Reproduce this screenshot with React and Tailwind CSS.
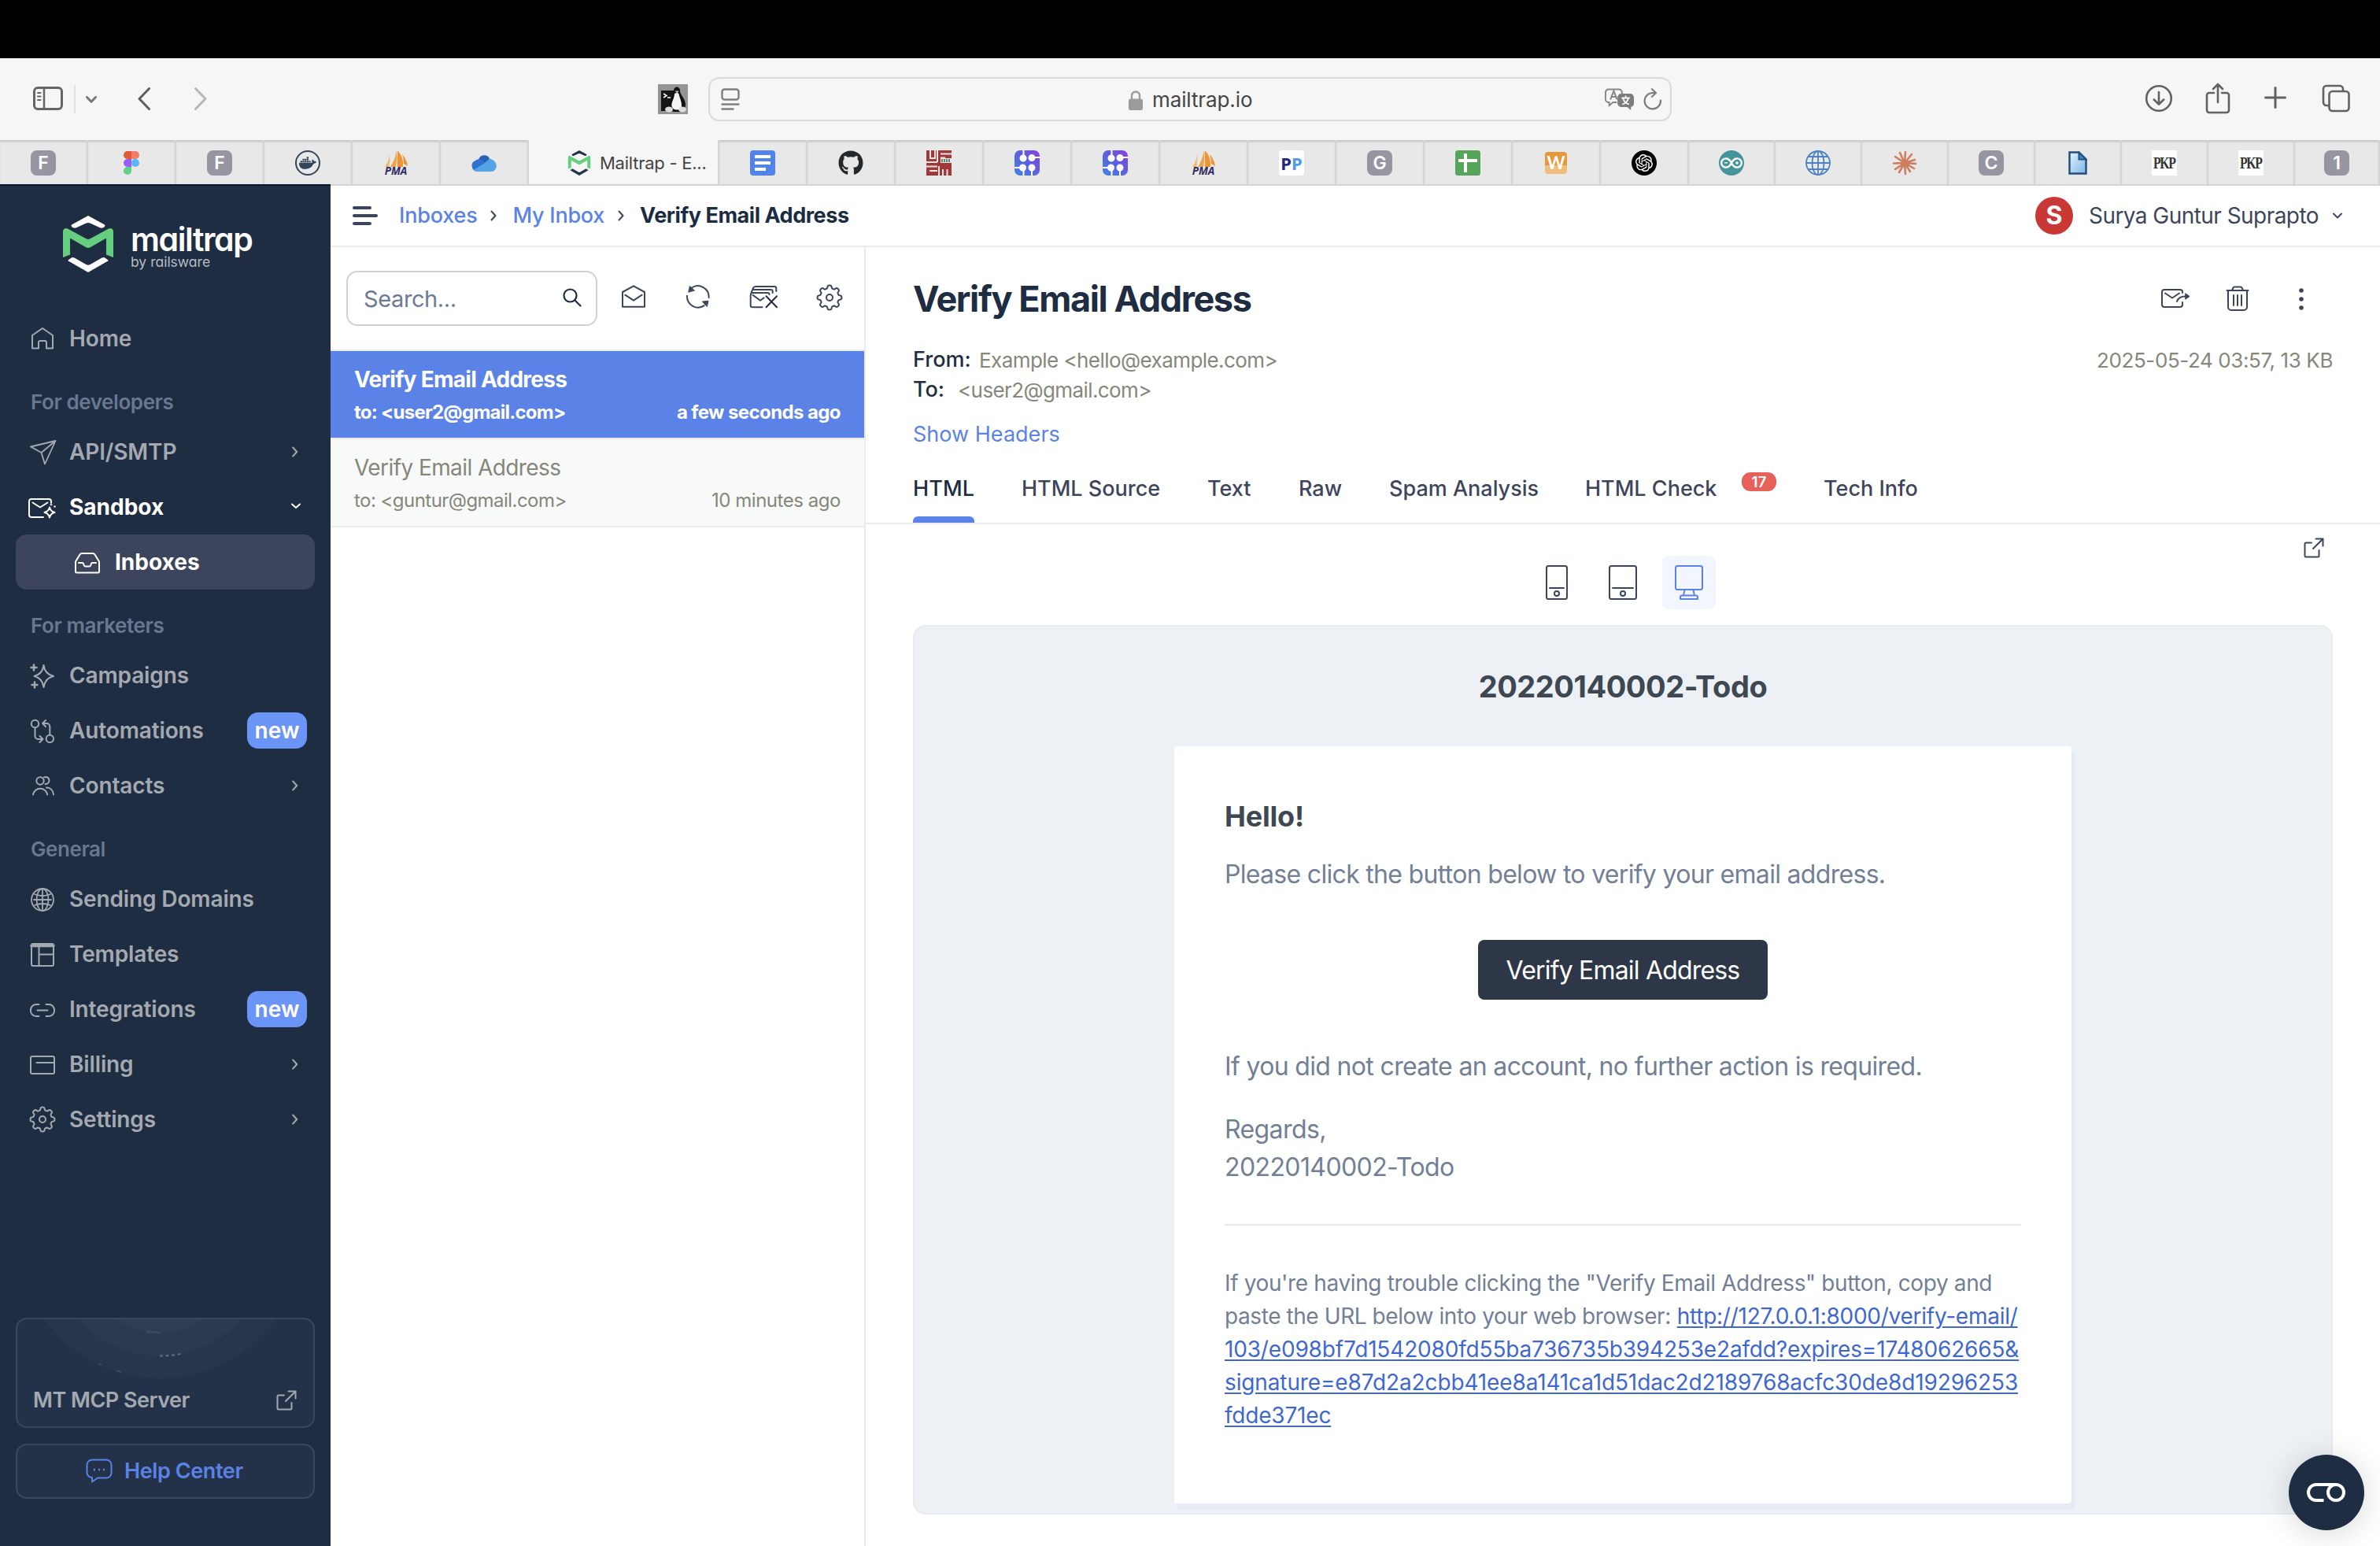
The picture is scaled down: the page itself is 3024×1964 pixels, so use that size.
import React from "react";
import { FaGithub, FaDocker } from "react-icons/fa";
import { SiOpenai, SiArduino } from "react-icons/si";

function T({ className = "", children }) {
  return <span className={"whitespace-nowrap " + className}>{children}</span>;
}

/* ---------- generic svg wrapper ---------- */
function Svg({ vb, className, sw = 2, children }) {
  return (
    <svg viewBox={vb} className={"shrink-0 " + className} fill="none" stroke="currentColor" strokeWidth={sw} strokeLinecap="round" strokeLinejoin="round">
      {children}
    </svg>
  );
}

function gearPath(c, r1, r2) {
  const pts = [];
  for (let i = 0; i < 160; i++) {
    const a = (i / 160) * Math.PI * 2;
    const k = Math.tanh(2.2 * Math.cos(8 * a)) / Math.tanh(2.2);
    const r = (r1 + r2) / 2 + ((r2 - r1) / 2) * k;
    pts.push(`${(c + r * Math.sin(a)).toFixed(2)} ${(c - r * Math.cos(a)).toFixed(2)}`);
  }
  return "M" + pts.join("L") + "Z";
}

function Gear({ className }) {
  return (
    <Svg vb="0 0 36 36" className={className}>
      <path d={gearPath(18, 11.8, 15.4)} />
      <circle cx="18" cy="18" r="4" />
    </Svg>
  );
}

function External({ className }) {
  return (
    <Svg vb="0 0 26 26" className={className}>
      <path d="M10 6.500H3a1.500 1.500 0 0 0-1.500 1.500v15A1.500 1.500 0 0 0 3 24.500h15a1.500 1.500 0 0 0 1.500-1.500v-7" />
      <path d="M12 14 24.500 1.500M15.500 1.500h9v9" strokeLinejoin="miter" />
    </Svg>
  );
}

/* ---------- browser chrome ---------- */
function MailtrapMark({ className, dark }) {
  const edge = dark ? "#26334a" : "#ffffff";
  return (
    <svg viewBox="0 0 64 72" className={className} fill="none">
      <path d="M32 0 53 11.500c1 .8 0 2.500-1.500 3.500-1.500 1-3 1-4.500.3L34.500 9.500a6 6 0 0 0-5 0L17 15.300c-1.500.7-3 .7-4.500-.3-1.500-1-2.500-2.700-1.500-3.500Z" fill={edge} />
      <path d="M0 20c0-3.500 3.500-5 6-3.500l23.500 12.800a5 5 0 0 0 5 0L58 16.500c2.500-1.500 6 0 6 3.500v33l-9-3.500V28.500L35 40a6 6 0 0 1-6 0L9 28.500v21L0 53Z" fill="#66cf7f" />
      <path d="M32 72 6 57l4-3c1.500-1.200 3-1.200 4.500-.4L29.500 62a5 5 0 0 0 5 0l15-8.400c1.500-.8 3-.8 4.500.4l4 3Z" fill={edge} />
    </svg>
  );
}

function LetterTile({ children }) {
  return (
    <div className="flex h-8 w-8 items-center justify-center rounded-lg bg-[#9695a2] text-[23px] leading-none font-semibold text-white">
      {children}
    </div>
  );
}

function Figma() {
  return (
    <svg viewBox="0 0 20 30" className="h-[30px] w-5">
      <path d="M5 0h5v10H5A5 5 0 0 1 5 0Z" fill="#e25a33" />
      <path d="M10 0h5a5 5 0 0 1 0 10h-5Z" fill="#ee7e6b" />
      <path d="M5 10h5v10H5a5 5 0 0 1 0-10Z" fill="#9a5cf7" />
      <circle cx="15" cy="15" r="5" fill="#56b6f9" />
      <path d="M5 20h5v5a5 5 0 1 1-5-5Z" fill="#5fcf8a" />
    </svg>
  );
}

function Docker() {
  return (
    <div className="flex h-8 w-8 items-center justify-center rounded-full border-[2.5px] border-[#33465a] text-[#33465a]">
      <FaDocker className="h-[22px] w-[22px]" />
    </div>
  );
}

function Pma() {
  return (
    <div className="relative flex h-8 w-8 flex-col items-center justify-end">
      <svg viewBox="0 0 32 22" className="absolute top-0 left-0 h-[22px] w-8">
        <path d="M8 4Q8 13 2 21h5Q9 13 8 4Z" fill="#f3b567" />
        <path d="M17 0q-2 12-8 21h7q2-10 1-21Z" fill="#f2a24a" />
        <path d="M18 0q8 8 7 21h-7Z" fill="#f09433" />
        <path d="M24 5q6 7 7 15l-5-3q0-7-2-12Z" fill="#f09433" />
      </svg>
      <span className="relative font-['Noto_Sans'] text-[13.500px] leading-[11px] font-bold text-[#2f2c62] italic">PMA</span>
    </div>
  );
}

function Cloud() {
  return (
    <svg viewBox="0 0 32 22" className="h-[22px] w-8">
      <path d="M9 7a7.500 7.500 0 0 1 14-1.500L16 15Z" fill="#2a5fb4" />
      <path d="M7 21.500A7 7 0 0 1 5 8a7 7 0 0 1 6.500-1.500L24 14 10 22Z" fill="#2f73cf" />
      <path d="M23 5.500c4.500 1 8.500 4 8.800 9A7 7 0 0 1 25 22H7.500a7 7 0 0 1-5-2L17 11Z" fill="#54a4e6" />
    </svg>
  );
}

function Docs() {
  return (
    <div className="flex h-8 w-8 flex-col gap-1 rounded bg-[#5083ee] px-1.5 pt-1.5">
      <div className="h-1 w-5 bg-white" />
      <div className="h-1 w-5 bg-white" />
      <div className="h-1 w-3.5 bg-white" />
    </div>
  );
}

function RedMaze() {
  return (
    <svg viewBox="0 0 32 32" className="h-8 w-8">
      <path d="M0 0h32v32H0Z" fill="#a33636" />
      <path d="M5 0v10h6V0M14 15V0M18 4.500h14M18 9.500h6M0 15h14M0 20.500h14M4 26h10M16 32V20M21 32v-8M26.500 32v-8" stroke="#e8e8e8" strokeWidth="2" fill="none" />
      <path d="M18 10h14v6H18Z" fill="#dfe7e3" />
      <path d="M20 11v4M23 11v4M26 11v4M29 11v4" stroke="#2f6b5a" strokeWidth="1.500" />
    </svg>
  );
}

function Nodes() {
  return (
    <svg viewBox="0 0 32 32" className="h-8 w-8">
      <defs>
        <linearGradient id="nodes" x1="0" y1="1" x2="1" y2="0">
          <stop offset="0" stopColor="#3f86e8" />
          <stop offset=".5" stopColor="#5b60de" />
          <stop offset="1" stopColor="#8a3fe0" />
        </linearGradient>
      </defs>
      <rect width="32" height="32" rx="7" fill="url(#nodes)" />
      <g stroke="#fff" strokeWidth="2" fill="#fff">
        <path d="M11.500 0v10M22 9h10M0 22h10M22 22v10M11.500 22v10" />
        <circle cx="11" cy="10" r="3.500" />
        <circle cx="22" cy="9.500" r="3.500" />
        <circle cx="10.500" cy="22" r="3.500" />
        <circle cx="22" cy="22" r="3.500" />
      </g>
    </svg>
  );
}

function Pp() {
  return (
    <div className="flex h-8 w-8 items-center justify-center rounded bg-white font-['Noto_Sans'] text-[22px] leading-none font-bold">
      <span className="text-[#1d2a80]">P</span>
      <span className="text-[#4a9be8]">P</span>
    </div>
  );
}

function Sheets() {
  return (
    <svg viewBox="0 0 32 32" className="h-8 w-8">
      <rect width="32" height="32" rx="3.500" fill="#57a55a" />
      <path d="M13 4v24M4 13h24" stroke="#fff" strokeWidth="4" />
    </svg>
  );
}

function WTile() {
  return (
    <div className="flex h-7 w-7 items-center justify-center rounded bg-linear-to-b from-[#e8963a] from-60% to-[#efbd7c] to-60% font-['Lato'] text-[22px] leading-none font-bold text-white">
      W
    </div>
  );
}

function Gpt() {
  return (
    <div className="flex h-8 w-8 items-center justify-center rounded-full bg-black text-white">
      <SiOpenai className="h-[22px] w-[22px]" />
    </div>
  );
}

function Arduino() {
  return (
    <div className="flex h-8 w-8 items-center justify-center rounded-full bg-[#45959b] text-white">
      <SiArduino className="h-7 w-7" />
    </div>
  );
}

function BlueGlobe() {
  return (
    <Svg vb="0 0 32 32" className="h-8 w-8 text-[#4c82c3]" sw={1.8}>
      <circle cx="16" cy="16" r="15" />
      <ellipse cx="16" cy="16" rx="7.500" ry="15" />
      <path d="M16 1v30M1 16h30M4 8h24M4 24h24" />
    </Svg>
  );
}

function Burst() {
  return (
    <Svg vb="0 0 32 32" className="h-8 w-8 text-[#d07d5f]" sw={2.6}>
      <path d="M16 16 10 3M16 16 17 2M16 16l9-11M16 16l13-4M16 16l14 1M16 16l12 7M16 16l7 11M16 16l1 14M16 16 9 28M16 16 4 24M16 16 2 16.500M16 16 4 8" />
    </Svg>
  );
}

function FileIcon() {
  return (
    <svg viewBox="0 0 24 30" className="h-[30px] w-6">
      <defs>
        <linearGradient id="file" x1="0" y1="0" x2="1" y2="1">
          <stop offset="0" stopColor="#e4f1fb" />
          <stop offset="1" stopColor="#7db6e6" />
        </linearGradient>
      </defs>
      <path d="M1.500 1.500h12l9 9v18h-21Z" fill="url(#file)" stroke="#24507f" strokeWidth="2.500" />
      <path d="M13.500 1.500v9h9Z" fill="#3f8ad0" stroke="#24507f" strokeWidth="2" />
    </svg>
  );
}

function Pkp() {
  return (
    <div className="flex h-8 w-8 items-center justify-center overflow-hidden bg-white">
      <span className="scale-x-[0.88] scale-y-[1.15] font-['Liberation_Serif'] text-[18px] leading-none font-bold tracking-[-1.5px] text-[#333]">PKP</span>
    </div>
  );
}

function Tab({ className = "w-28", children }) {
  return (
    <div className={"flex h-[56px] shrink-0 items-center justify-center border-r-2 border-[#d5d5d5] bg-[#e8e8e8] pt-0.5 shadow-[inset_0_3px_3px_-1px_#c2c2c2] " + className}>
      {children}
    </div>
  );
}

const tabsA = [<LetterTile>F</LetterTile>, <Figma />, <LetterTile>F</LetterTile>, <Docker />, <Pma />, <Cloud />];
const tabsB = [<Docs />, <FaGithub className="h-8 w-8 text-[#24292e]" />, <RedMaze />, <Nodes />, <Nodes />, <Pma />, <Pp />, <LetterTile>G</LetterTile>, <Sheets />, <WTile />, <Gpt />];
const tabsC = [<Arduino />, <BlueGlobe />, <Burst />, <LetterTile>C</LetterTile>, <FileIcon />, <Pkp />, <Pkp />];

function Penguin() {
  return (
    <svg viewBox="0 0 38 38" className="ml-[573px] h-[38px] w-[38px] shrink-0">
      <path d="M0 0h38v38H0Z" fill="#949494" />
      <path d="M4 8h17v26H4Z" fill="#161616" />
      <path d="M7 12l4 2.500L7 17M12 17h4" stroke="#fff" strokeWidth="1.500" fill="none" />
      <path d="M20 8c0-6 8-6 8 0 0 6 7 10 7 18 0 4-3 9-6 9h-8c-4 0-7-3-7-8 0-8 6-11 6-19Z" fill="#111" />
      <path d="M21 12c2-1.500 4-1.500 5.500 0 1 6 4 10 3.500 16-1 6-11 6-12.500 0-1-5 3.500-10 3.500-16Z" fill="#f4f4f4" />
      <ellipse cx="14" cy="32" rx="5" ry="3.500" fill="#ddd" />
      <ellipse cx="31" cy="32" rx="5" ry="3.500" fill="#ddd" />
      <path d="M21.500 8.500h5l-2 3Z" fill="#ccc" />
    </svg>
  );
}

function Browser() {
  return (
    <>
      <div className="h-[74px] shrink-0 bg-black" />
      <div className="flex h-[104px] shrink-0 items-center bg-[#f6f6f6] pl-[42px] text-[#666]">
        <Svg vb="0 0 38 30" className="h-[30px] w-[38px] -translate-y-px" sw={3}>
          <rect x="1.500" y="1.500" width="35" height="27" rx="4.500" />
          <path d="M14 2v26" strokeWidth="2.500" />
          <path d="M6 8h3.500M6 12.500h3.500M6 17h3.500" strokeWidth="2" />
        </Svg>
        <div className="ml-[14px] h-9 w-0.5 bg-[#e2e2e2]" />
        <Svg vb="0 0 14 9" className="ml-[13px] h-[9px] w-[14px] text-[#777]" sw={3}>
          <path d="M1.500 1.500 7 7.200l5.500-5.700" />
        </Svg>
        <Svg vb="0 0 16 29" className="ml-[52px] h-[29px] w-4 -translate-y-px text-[#5e5e5e]" sw={3}>
          <path d="M14.500 1.500 2 14.500l12.500 13" />
        </Svg>
        <Svg vb="0 0 16 29" className="ml-14 h-[29px] w-4 -translate-y-px text-[#b7b7b7]" sw={3}>
          <path d="M1.500 1.500 14 14.500 1.500 27.500" />
        </Svg>
        <Penguin />
        <div className="ml-[26px] flex h-[56px] w-[1224px] shrink-0 items-center rounded-[14px] border-2 border-[#dadada] px-[14px]">
          <Svg vb="0 0 24 28" className="h-7 w-6 text-[#808080]" sw={2.4}>
            <rect x="1.500" y="1.500" width="21" height="13" rx="3" />
            <path d="M1.500 20.500h21M1.500 26.500h14" />
          </Svg>
          <svg viewBox="0 0 18 25" className="mt-[3px] ml-[494px] h-[25px] w-[18px] text-[#9b9b9b]">
            <rect y="10.500" width="18" height="14.500" rx="2.500" fill="currentColor" />
            <path d="M4 12V6.500a5 5 0 0 1 10 0V12" fill="none" stroke="currentColor" strokeWidth="2.400" />
          </svg>
          <T className="mt-px ml-3 text-[26px] leading-8 tracking-[-0.1px] text-[#454545]">mailtrap.io</T>
          <div className="ml-auto flex items-center gap-[11px]">
            <svg viewBox="0 0 40 28" className="h-7 w-[38px]" fill="none" preserveAspectRatio="none">
              <path d="M5 1.500h14a4 4 0 0 1 4 4v3M16 18h-5l-5 4v-4H5a4 4 0 0 1-4-4V5.500a4 4 0 0 1 4-4" stroke="#858585" strokeWidth="2" />
              <path d="m7.500 14.500 4.500-11 4.500 11M9 11h6" stroke="#858585" strokeWidth="2" />
              <path d="M22 7h12a5 5 0 0 1 5 5v7a5 5 0 0 1-4 4.800V28l-5-4h-8a5 5 0 0 1-5-5v-7a5 5 0 0 1 5-5Z" fill="#7d7d7d" />
              <path d="M28 9.500v2.500M22.500 12.500h11M24.500 13c1 3.500 4 6.500 8 7.500M31.500 13c-1 3.500-4 6.500-8 7.500" stroke="#fff" strokeWidth="1.800" />
            </svg>
            <Svg vb="0 0 24 28" className="-mr-[4px] h-7 w-6 text-[#7d7d7d]" sw={2.2}>
              <path d="M22 15.500A10.200 10.200 0 1 1 12 6h3" />
              <path d="m11 1.200 5 4.800-5 4.800" />
            </Svg>
          </div>
        </div>
        <div className="ml-auto flex items-center pr-[38px] text-[#626262]">
          <Svg vb="0 0 36 36" className="h-9 w-9 -translate-y-px" sw={2.6}>
            <circle cx="18" cy="18" r="15.800" />
            <path d="M18 10v15M11.800 19.500 18 25.700l6.200-6.200" />
          </Svg>
          <Svg vb="0 0 32 40" className="ml-[41px] h-10 w-8 -translate-y-px" sw={2.6}>
            <path d="M11 13H5a3 3 0 0 0-3 3v19a3 3 0 0 0 3 3h22a3 3 0 0 0 3-3V16a3 3 0 0 0-3-3h-6" />
            <path d="M16 25V2.500M10 8l6-6 6 6" />
          </Svg>
          <Svg vb="0 0 28 28" className="ml-[43px] h-7 w-7 -translate-y-0.5" sw={3}>
            <path d="M14 1.500v25M1.500 14h25" />
          </Svg>
          <Svg vb="0 0 36 36" className="ml-[45px] h-9 w-9 -translate-y-px" sw={2.6}>
            <path d="M8.500 27H6a4 4 0 0 1-4-4V6a4 4 0 0 1 4-4h17a4 4 0 0 1 4 4v2.500" />
            <rect x="9.500" y="9" width="25" height="25" rx="4" />
          </Svg>
        </div>
      </div>
      <div className="flex h-[58px] shrink-0 border-b-2 border-[#d5d5d5] bg-[#e8e8e8]">
        {tabsA.map((t, i) => <Tab key={i}>{t}</Tab>)}
        <div className="flex h-[56px] w-[242px] shrink-0 items-center border-r-2 border-[#d5d5d5] bg-[#f6f6f6] pt-0.5 pl-[49px]">
          <MailtrapMark dark className="h-8 w-[30px]" />
          <T className="ml-[11px] text-[22px] leading-7 tracking-[-0.25px] text-[#444]">Mailtrap - E...</T>
        </div>
        {tabsB.map((t, i) => <Tab key={i}>{t}</Tab>)}
        {tabsC.map((t, i) => <Tab key={i} className="w-[110px]">{t}</Tab>)}
        <Tab className="w-[108px] border-r-0"><LetterTile>1</LetterTile></Tab>
      </div>
    </>
  );
}

/* ---------- sidebar ---------- */
const icons = {
  home: (
    <Svg vb="0 0 36 36" className="h-9 w-9">
      <path d="M5 30.500V14L18 5l13 9v16.500h-8V23a2 2 0 0 0-2-2h-6a2 2 0 0 0-2 2v7.500Z" />
    </Svg>
  ),
  plane: (
    <Svg vb="0 0 36 36" className="h-9 w-9" sw={1.8}>
      <path d="M34.500 4 3 11.500l13.500 7.500L21 33.500ZM34.500 4l-18 15" />
    </Svg>
  ),
  sandbox: (
    <Svg vb="0 0 36 36" className="h-9 w-9">
      <path d="M19 31H4a3 3 0 0 1-3-3V11a3 3 0 0 1 3-3h22a3 3 0 0 1 3 3v1.500" />
      <path d="m5.500 12.500 9.500 6 9.500-6" />
      <path d="M27 18.500q1 5 6.500 6.500-5.500 1.500-6.500 6.500-1-5-6.500-6.500 5.500-1.500 6.500-6.500Z" />
      <circle cx="33.500" cy="17.500" r="1.200" fill="currentColor" stroke="none" />
      <circle cx="29" cy="15" r=".4" />
    </Svg>
  ),
  inbox: (
    <Svg vb="0 0 36 36" className="h-9 w-9">
      <path d="M3 17.500 8.500 8.500Q9.500 7 11 7h14q1.500 0 2.500 1.500l5.500 9V30a1.500 1.500 0 0 1-1.500 1.500h-27A1.500 1.500 0 0 1 3 30Z" />
      <path d="M7 19h4.500q1.500 0 2 2.500.5 2 2 2h5q1.500 0 2-2 .5-2.500 2-2.500H29" />
    </Svg>
  ),
  sparkle: (
    <Svg vb="0 0 36 36" className="h-9 w-9">
      <path d="M19.500 5q1.500 11.500 12.500 14-11 2.500-12.500 14Q18 21.500 7.500 19 18 16.500 19.500 5Z" />
      <path d="M7 4.500v7M3.500 8h7M8 26.500v7M4.500 30h7" strokeWidth="2.500" />
    </Svg>
  ),
  flow: (
    <Svg vb="0 0 36 36" className="h-9 w-9">
      <circle cx="8.500" cy="9.500" r="4.700" />
      <circle cx="27.300" cy="28.500" r="4.700" />
      <path d="M8.500 15v10a4 4 0 0 0 4 4H18M14.500 25l4 4-4 4M27.300 23V13a4 4 0 0 0-4-4H18M22 5l-4 4 4 4" />
    </Svg>
  ),
  people: (
    <Svg vb="0 0 36 36" className="h-9 w-9">
      <circle cx="15" cy="12" r="4.700" />
      <path d="M6 29.500a9.200 9.200 0 0 1 18.200 0M20 7.500a4.500 4.500 0 1 1 1.500 8.500M23 20.500c5 0 8.500 3.500 9 9" />
    </Svg>
  ),
  globe: (
    <Svg vb="0 0 36 36" className="h-9 w-9" sw={1.8}>
      <circle cx="18" cy="19" r="14" />
      <ellipse cx="18" cy="19" rx="7.500" ry="14" />
      <path d="M18 5v28M7 19h22M8 12q10 4 20 0M8 26q10-4 20 0" />
    </Svg>
  ),
  template: (
    <Svg vb="0 0 36 36" className="h-9 w-9">
      <rect x="4" y="5" width="28" height="28" rx="2" />
      <path d="M4 7.500h28" strokeWidth="3.500" />
      <path d="M13.500 8v25M13.500 18.500H32" />
    </Svg>
  ),
  link: (
    <Svg vb="0 0 36 36" className="h-9 w-9">
      <path d="M13.500 12H10a7 7 0 0 0-7 7 7 7 0 0 0 7 8h3.500M22.500 12H26a7 7 0 0 1 7 7 7 7 0 0 1-7 8h-3.500M11.500 19.500h13" />
    </Svg>
  ),
  card: (
    <Svg vb="0 0 36 36" className="h-9 w-9">
      <rect x="3" y="8" width="30" height="22" rx="2" />
      <path d="M10.500 16H32" />
    </Svg>
  ),
  gear: <Gear className="h-9 w-9" />,
};

function Chevron({ open }) {
  return open ? (
    <Svg vb="0 0 12 8" className="mr-[38px] ml-auto h-2 w-3 -translate-y-px" sw={2}>
      <path d="m1 1.500 5 4.500 5-4.500" />
    </Svg>
  ) : (
    <Svg vb="0 0 8 14" className="mr-[41px] ml-auto h-[14px] w-2" sw={2}>
      <path d="m1.200 1.500 5 5.500-5 5.500" />
    </Svg>
  );
}

function NewBadge() {
  return (
    <span className="mr-[30px] ml-auto flex h-[46px] w-[76px] items-center justify-center rounded-[14px] bg-[#6b94f7] text-white">
      <T className="text-[28px] leading-8 font-[580] tracking-[0.1px]">new</T>
    </span>
  );
}

function Item({ icon, label, tail }) {
  return (
    <div className="flex h-[70px] shrink-0 items-center pl-9 text-[#a4a9b1]">
      {icons[icon]}
      <T className="ml-4 text-[28px] leading-9 font-[570] tracking-[-0.13px]">{label}</T>
      {tail}
    </div>
  );
}

function Heading({ children }) {
  return (
    <div className="flex h-[74px] shrink-0 items-center pt-[18px] pl-[39px]">
      <T className="text-[26px] leading-8 font-[600] tracking-[-0.42px] text-[#6a7790]">{children}</T>
    </div>
  );
}

function Sidebar() {
  return (
    <aside className="-mt-0.5 flex w-[420px] shrink-0 flex-col border-t-2 border-[#0c1630] bg-[#1f2d42]">
      <div className="flex h-[159px] shrink-0 items-start pt-[38px] pl-20">
        <MailtrapMark className="h-[72px] w-16" />
        <div className="flex flex-col pt-[11px] pl-[22px]">
          <T className="text-[41px] leading-[38px] font-semibold tracking-[-1.4px] text-white [font-feature-settings:'cv11']">mailtrap</T>
          <T className="text-[17.500px] leading-[20px] text-[#b6bcc6] [font-feature-settings:'cv11']">by railsware</T>
        </div>
      </div>
      <Item icon="home" label="Home" />
      <Heading>For developers</Heading>
      <Item icon="plane" label="API/SMTP" tail={<Chevron />} />
      <div className="flex h-[70px] shrink-0 items-center pl-9 text-white">
        {icons.sandbox}
        <T className="ml-4 text-[28px] leading-9 font-[670]">Sandbox</T>
        <Chevron open />
      </div>
      <div className="mx-5 flex h-[70px] shrink-0 items-center rounded-[14px] bg-[#3c455c] pl-[73px] text-white">
        {icons.inbox}
        <T className="ml-[17px] text-[28px] leading-9 font-[670]">Inboxes</T>
      </div>
      <Heading>For marketers</Heading>
      <Item icon="sparkle" label="Campaigns" />
      <Item icon="flow" label="Automations" tail={<NewBadge />} />
      <Item icon="people" label="Contacts" tail={<Chevron />} />
      <Heading>General</Heading>
      <Item icon="globe" label="Sending Domains" />
      <Item icon="template" label="Templates" />
      <Item icon="link" label="Integrations" tail={<NewBadge />} />
      <Item icon="card" label="Billing" tail={<Chevron />} />
      <Item icon="gear" label="Settings" tail={<Chevron />} />
      <div className="mx-5 mt-auto mb-[60px] flex flex-col gap-5">
        <div className="relative flex h-[140px] items-end justify-between overflow-hidden rounded-[14px] border-2 border-[#3d465d] bg-[#233248] pr-[21px] pb-[17px] pl-5 text-[#a4a9b1]">
          <svg viewBox="0 0 376 136" className="absolute top-0 left-0 h-[136px] w-[376px]" fill="none">
            <circle cx="181" cy="-106" r="181" fill="#27364c" />
            <circle cx="181" cy="-92" r="138.500" fill="#2b3a50" />
            <circle cx="181" cy="-83" r="100" fill="#2f3e54" />
            <path d="M164 15.500 181.500 17" stroke="#3b495e" strokeWidth="3" />
            <path d="M181 46.500q14 0 27-2.500" stroke="#5b6779" strokeWidth="2.500" strokeDasharray="4 3.500" />
            <path d="m126 65 6 2M103 56l4 2" stroke="#3d4a5f" strokeWidth="2" />
          </svg>
          <T className="relative text-[27px] leading-8 font-semibold tracking-[-0.5px]">MT MCP Server</T>
          <External className="relative mb-[3px] h-[26px] w-[26px]" />
        </div>
        <div className="flex h-[70px] items-center rounded-[14px] border-2 border-[#3d465d] bg-[#233248] pl-[87px] text-[#5a82e7]">
          <Svg vb="0 0 34 32" className="h-8 w-[34px]">
            <path d="M8 1.500h18a6.500 6.500 0 0 1 6.500 6.500v10a6.500 6.500 0 0 1-6.500 6.500H15l-7 5v-5.500A6.500 6.500 0 0 1 1.500 18V8A6.500 6.500 0 0 1 8 1.500Z" />
            <path d="M11 13.500v1M17 13.500v1M23 13.500v1" strokeWidth="2.200" />
          </Svg>
          <T className="ml-[15px] text-[27px] leading-8 font-semibold tracking-[-0.4px]">Help Center</T>
        </div>
      </div>
    </aside>
  );
}

/* ---------- header ---------- */
function Crumb() {
  return (
    <Svg vb="0 0 8 14" className="mr-[20px] ml-[17px] h-[14px] w-2 text-[#3c455c]" sw={2}>
      <path d="m1.500 1.500 5 5.500-5 5.500" />
    </Svg>
  );
}

function Header() {
  return (
    <header className="flex h-[78px] shrink-0 items-center border-b-2 border-[#ebebeb] bg-white pl-7">
      <div className="flex w-8 flex-col gap-[6px]">
        <div className="h-1 w-6 rounded-full bg-[#3c455c]" />
        <div className="h-1 w-8 rounded-full bg-[#3c455c]" />
        <div className="h-1 w-6 rounded-full bg-[#3c455c]" />
      </div>
      <T className="ml-[27px] text-[27px] leading-8 font-medium tracking-[-0.2px] text-[#5a82e7]">Inboxes</T>
      <Crumb />
      <T className="text-[27px] leading-8 font-medium tracking-[-0.25px] text-[#5a82e7]">My Inbox</T>
      <Crumb />
      <T className="text-[27px] leading-8 font-[650] tracking-[-0.45px] text-[#1a2b42]">Verify Email Address</T>
      <div className="ml-auto flex items-center pr-12">
        <div className="flex h-12 w-12 items-center justify-center rounded-full bg-[#c93834] text-[32px] leading-none font-bold text-white">S</div>
        <T className="ml-5 text-[28px] leading-8 tracking-[-0.55px] text-[#3c455c]">Surya Guntur Suprapto</T>
        <Svg vb="0 0 12 8" className="ml-[18px] h-2 w-3 text-[#3c455c]" sw={2}>
          <path d="m1 1.500 5 5 5-5" />
        </Svg>
      </div>
    </header>
  );
}

/* ---------- message list ---------- */
function List() {
  return (
    <section className="flex w-[680px] shrink-0 flex-col border-r-2 border-[#ebebeb] bg-white">
      <div className="flex h-[132px] shrink-0 items-center border-b-2 border-[#ebebeb] pl-5 text-[#3c455c]">
        <div className="flex h-[70px] w-[319px] items-center justify-between rounded-[14px] border-2 border-[#d0d2da] pr-[18px] pl-5">
          <T className="mt-px text-[29px] leading-9 tracking-[-0.4px] text-[#6b7a95]">Search...</T>
          <Svg vb="0 0 24 24" className="h-6 w-6 -translate-y-px text-[#1f2d42]" sw={2.2}>
            <circle cx="9.500" cy="9.500" r="8" />
            <path d="m15.500 15.500 7 7" />
          </Svg>
        </div>
        <Svg vb="0 0 32 32" className="ml-[30px] h-8 w-8 -translate-y-0.5">
          <path d="M2 10 16 2.300 30 10v18.700H2Z" />
          <path d="m5.300 13.700 10.700 7 10.700-7" />
        </Svg>
        <Svg vb="0 0 32 32" className="ml-[50px] h-8 w-8 -translate-y-0.5">
          <path d="M8 4.500A14 14 0 0 1 29.600 17" />
          <path d="M23.800 27.200A14 14 0 0 1 2 14.800" />
          <path d="M3.800 9.800 5.400 2.500l5.800 5.400ZM28.600 21.300l-7.200.8 5.800 6.200Z" fill="currentColor" strokeWidth="1" />
        </Svg>
        <Svg vb="0 0 38 32" className="ml-[49px] h-8 w-[38px] -translate-y-px">
          <path d="M16.500 28.200H4a2.300 2.300 0 0 1-2.300-2.300V13.500q0-1.500.8-3.500l2.500-6Q6 2 8 2h24q2.300 0 2.300 2.300V8" />
          <path d="M5 6h22.500q2.200 0 2.200 2.200v1.800M3.500 10h20q2 0 2 2" />
          <path d="m4.500 12.700 9.500 7.100 4.700-3.500" />
          <path d="m21.500 14.200 13.500 14M35 14.200l-13.500 14" stroke="#1f2a48" />
        </Svg>
        <Gear className="ml-[46px] h-9 w-9 -translate-y-px" />
      </div>
      <div className="flex h-28 shrink-0 flex-col border-b-2 border-[#ebebeb] bg-[#5a82e7] pt-[17px] pr-[30px] pl-[30px] text-white">
        <T className="text-[28px] leading-[38px] font-[650] tracking-[-0.72px]">Verify Email Address</T>
        <div className="flex justify-between pt-[5px]">
          <T className="text-[24px] leading-9 font-[650] tracking-[-0.75px]">to: &lt;user2@gmail.com&gt;</T>
          <T className="text-[24px] leading-9 font-[650] tracking-[-0.6px]">a few seconds ago</T>
        </div>
      </div>
      <div className="flex h-28 shrink-0 flex-col border-b-2 border-[#ebebeb] bg-[#f8faf9] pt-[17px] pr-[30px] pl-[30px] text-[#84877a]">
        <T className="text-[28px] leading-[38px] tracking-[-0.58px]">Verify Email Address</T>
        <div className="flex justify-between pt-[5px]">
          <T className="text-[24px] leading-9 tracking-[-0.54px]">to: &lt;guntur@gmail.com&gt;</T>
          <T className="text-[24px] leading-9 tracking-[-0.46px]">10 minutes ago</T>
        </div>
      </div>
    </section>
  );
}

/* ---------- message ---------- */
function Message() {
  return (
    <main className="flex min-w-0 flex-1 flex-col bg-white text-[#3c455c]">
      <div className="flex h-[350px] shrink-0 flex-col pl-[60px]">
        <div className="flex h-[132px] items-center">
          <T className="text-[45px] leading-[60px] font-[650] tracking-[-1.4px] text-[#1f2d42]">Verify Email Address</T>
          <div className="ml-auto flex items-center">
            <Svg vb="0 0 38 26" className="h-[26px] w-[38px] -translate-y-px">
              <path d="M28 18v3a3 3 0 0 1-3 3H5a3 3 0 0 1-3-3V5a3 3 0 0 1 3-3h20a3 3 0 0 1 3 3v1" />
              <path d="m6 6.500 9 6 9-6M21 17q2-6.500 11-6.500" />
              <path d="m32 7 5 3.500-5 3.500Z" fill="currentColor" strokeWidth="1" />
            </Svg>
            <Svg vb="0 0 30 32" className="ml-[45px] h-8 w-[30px] -translate-y-px">
              <path d="M1.500 6h27M3 6v21a4 4 0 0 0 4 4h16a4 4 0 0 0 4-4V6M8 6l1.500-3.500Q10 1.500 11 1.500h8q1 0 1.500 1L22 6M10 12v13M15 12v13M20 12v13" />
            </Svg>
            <svg viewBox="0 0 8 28" className="mr-24 ml-[62px] h-7 w-2" fill="currentColor">
              <circle cx="4" cy="3" r="2.800" />
              <circle cx="4" cy="14" r="2.800" />
              <circle cx="4" cy="25" r="2.800" />
            </svg>
          </div>
        </div>
        <div className="-mt-[8px] flex h-[38px] items-center text-[26px]">
          <T className="w-[84px] text-[27px] font-medium text-[#1f2d42]">From:</T>
          <T className="tracking-[-0.56px] text-[#84877a]">Example &lt;hello@example.com&gt;</T>
          <T className="mr-[60px] ml-auto tracking-[-0.4px] text-[#84877a]">2025-05-24 03:57, 13 KB</T>
        </div>
        <div className="flex h-[38px] items-center text-[26px]">
          <T className="w-[57px] text-[27px] font-medium text-[#1f2d42]">To:</T>
          <T className="tracking-[-0.6px] text-[#84877a]">&lt;user2@gmail.com&gt;</T>
        </div>
        <div className="flex h-[77px] items-center">
          <T className="text-[27px] tracking-[0.02px] text-[#5a82e7]">Show Headers</T>
        </div>
        <div className="flex h-[73px] text-[27px] leading-[60px] font-medium">
          <div className="mr-[60px] flex w-[78px] flex-col justify-between">
            <T className="tracking-[0.1px] text-[#1a2b42]">HTML</T>
            <div className="h-2 rounded-t-md bg-[#5a82e7]" />
          </div>
          <T className="w-[236px]">HTML Source</T>
          <T className="w-[116px]">Text</T>
          <T className="w-[115px]">Raw</T>
          <T className="w-[249px]">Spam Analysis</T>
          <T className="w-[199px]">HTML Check</T>
          <span className="mt-[9px] mr-[60px] flex h-6 w-11 items-center justify-center rounded-[11px] bg-[#e8605a]">
            <T className="text-[19px] leading-none font-semibold text-white">17</T>
          </span>
          <T>Tech Info</T>
        </div>
      </div>
      <div className="flex min-h-0 flex-1 flex-col border-t-2 border-[#ebebeb] pt-[17px] pr-[60px] pl-[60px]">
        <External className="mr-[11px] h-[26px] w-[26px] self-end" />
        <div className="-mt-[3px] flex h-[68px] shrink-0 items-center justify-center pl-[20px]">
          <Svg vb="0 0 28 44" className="h-11 w-7">
            <rect x="1" y="1" width="26" height="42" rx="2.500" />
            <path d="M5 29h18" />
            <circle cx="14" cy="36" r="3" />
          </Svg>
          <Svg vb="0 0 36 44" className="ml-[52px] h-11 w-9">
            <rect x="1" y="1" width="34" height="42" rx="2.500" />
            <path d="M5 29h26" />
            <circle cx="18" cy="36" r="3" />
          </Svg>
          <div className="ml-8 flex h-[68px] w-[68px] items-center justify-center rounded-lg bg-[#f2f7ff] text-[#5a82e7]">
            <Svg vb="0 0 36 44" className="h-11 w-9">
              <rect x="1" y="1" width="34" height="30" rx="2.500" />
              <path d="M12.500 31.500 11 38.500h14l-1.500-7M9 38.500h18a2 2 0 0 1 2 2V43H7v-2.500a2 2 0 0 1 2-2Z" />
            </Svg>
          </div>
        </div>
        <div className="mt-5 flex h-[1130px] shrink-0 flex-col items-center rounded-[16px] border-2 border-[#e9ebee] bg-[#edf1f6]">
          <div className="flex h-[152px] items-center">
            <T className="text-[38px] leading-[56px] font-bold tracking-[-0.45px] text-[#3d4852]">20220140002-Todo</T>
          </div>
          <div className="flex h-[962px] w-[1140px] shrink-0 flex-col rounded-[4px] bg-white px-16 pt-16 text-[32px] leading-[48px] text-[#718096] shadow-[4px_8px_0_#e6eaf4]">
            <h1 className="flex h-[50px] items-center">
              <T className="text-[36px] font-bold tracking-[-0.2px] text-[#3d4852]">Hello!</T>
            </h1>
            <p className="mt-[26px] flex h-12 -translate-y-px items-center"><T className="tracking-[-0.69px]">Please click the button below to verify your email address.</T></p>
            <div className="mx-auto mt-[58px] flex h-[76px] w-[368px] items-center justify-center rounded-lg bg-[#2d3748]">
              <T className="mt-px tracking-[-0.82px] text-white">Verify Email Address</T>
            </div>
            <p className="mt-[61px]"><T className="tracking-[-0.66px]">If you did not create an account, no further action is required.</T></p>
            <p className="mt-[32px]"><T className="tracking-[-0.6px]">Regards,</T></p>
            <p><T className="tracking-[-0.6px]">20220140002-Todo</T></p>
            <div className="mt-[48px] h-0.5 bg-[#e4e7ec]" />
            <p className="mt-[52px] text-[28px] leading-[42px] whitespace-nowrap">
              <T className="tracking-[-0.37px]">If you're having trouble clicking the "Verify Email Address" button, copy and</T><br />
              <T className="tracking-[-0.42px]">paste the URL below into your web browser:</T>{" "}
              <span className="text-[#3f68ce] underline underline-offset-[3px]">
                <T className="tracking-[-0.26px]">http://127.0.0.1:8000/verify-email/</T><br />
                <T className="tracking-[-0.17px]">103/e098bf7d1542080fd55ba736735b394253e2afdd?expires=1748062665&amp;</T><br />
                <T className="tracking-[-0.13px]">signature=e87d2a2cbb41ee8a141ca1d51dac2d2189768acfc30de8d19296253</T><br />
                <T className="tracking-[-0.2px]">fdde371ec</T>
              </span>
            </p>
          </div>
        </div>
      </div>
    </main>
  );
}

function Chat() {
  return (
    <div className="absolute top-[1848px] left-[2908px] flex h-24 w-24 items-center justify-center rounded-full bg-[#1f2d42] text-white shadow-[0_4px_40px_rgba(0,0,0,0.16)]">
      <svg viewBox="0 0 50 24" className="h-6 w-[50px]" fill="none" stroke="currentColor" strokeWidth="4">
        <path d="M21.500 22H12a10 10 0 0 1 0-20h25" />
        <circle cx="37" cy="12" r="10" />
      </svg>
    </div>
  );
}

export default function App() {
  return (
    <div className="relative flex h-[1964px] w-[3024px] flex-col overflow-hidden bg-white font-['Inter',sans-serif]">
      <Browser />
      <div className="flex min-h-0 flex-1">
        <Sidebar />
        <div className="flex min-w-0 flex-1 flex-col">
          <Header />
          <div className="flex min-h-0 flex-1">
            <List />
            <Message />
          </div>
        </div>
      </div>
      <Chat />
    </div>
  );
}
